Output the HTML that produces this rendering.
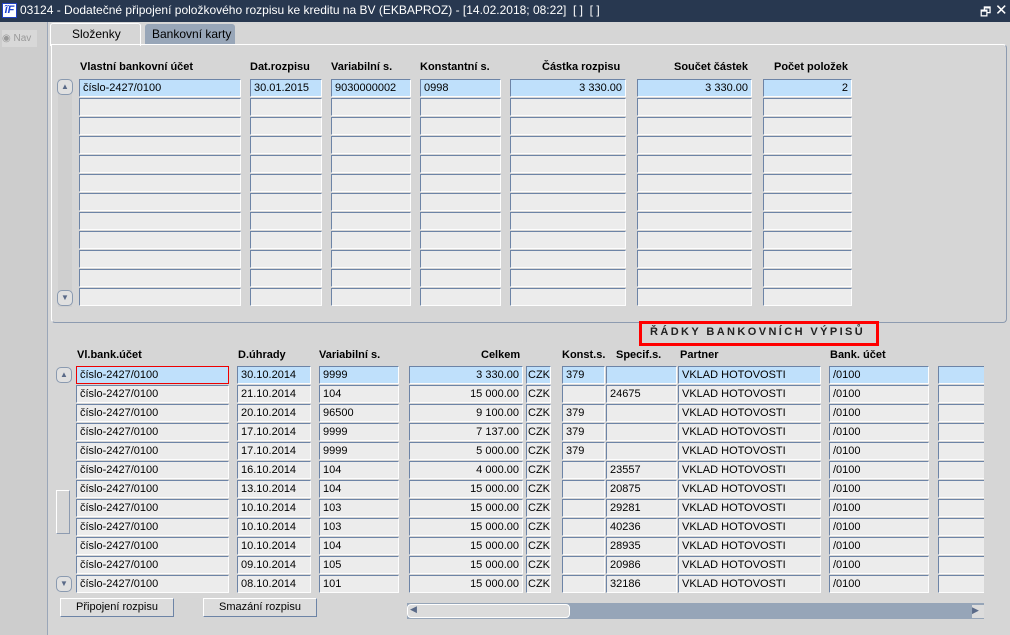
<!DOCTYPE html>
<html><head><meta charset="utf-8"><style>
*{margin:0;padding:0;box-sizing:border-box}
body{width:1010px;height:635px;overflow:hidden;background:#d6d6d6;font-family:"Liberation Sans",sans-serif;font-size:11px;color:#000;position:relative}
.a{position:absolute}
.f{position:absolute;height:18px;background:#ececec;border:1px solid;border-color:#6d84a6 #fdfdfd #fdfdfd #6d84a6;line-height:16px;padding:0 3px;white-space:nowrap;overflow:hidden;font-size:11px}
.s{background:#bfe0fb}
.r{text-align:right}
.h{position:absolute;font-weight:bold;font-size:11px;white-space:nowrap}
.btn{position:absolute;height:19px;border:1px solid;border-color:#fff #6d84a6 #6d84a6 #fff;background:#dcdcdc;text-align:center;line-height:17px;font-size:11px}
.sb{position:absolute;width:16px;height:16px;border:1px solid #8a9ab0;border-radius:5px;background:#e0e0e0;font-size:8px;color:#5a6a88;text-align:center;line-height:13px}
.row{position:absolute;left:0;height:19px;width:1010px}
.row .f{top:0}
.c1{left:79px;width:162px}.c2{left:250px;width:72px}.c3{left:331px;width:80px}.c4{left:420px;width:81px}.c5{left:510px;width:116px}.c6{left:637px;width:115px}.c7{left:763px;width:89px}
.b1{left:76px;width:153px}.b2{left:237px;width:74px}.b3{left:319px;width:80px}.b4{left:409px;width:114px;text-align:right}.b5{left:526px;width:25px;padding:0 1px}.b6{left:562px;width:43px}.b7{left:606px;width:71px}.b8{left:678px;width:143px}.b9{left:829px;width:100px}.b10{left:938px;width:46px;border-right:none}
</style></head><body>
<div class="a" style="left:0;top:0;width:1010px;height:22px;background:#283850"></div>
<div class="a" style="left:2px;top:3px;width:15px;height:15px;background:#fff;border:1px solid #2040c0;color:#1a3fd0;font-weight:bold;font-style:italic;font-size:11px;line-height:13px;text-align:center">ĩF</div>
<div class="a" style="left:20px;top:3px;color:#fff;font-size:12px;white-space:nowrap">03124 - Dodatečné připojení položkového rozpisu ke kreditu na BV (EKBAPROZ) - [14.02.2018; 08:22]&nbsp; [ ]&nbsp; [ ]</div>
<div class="a" style="left:980px;top:3px;color:#fff;font-size:12px">🗗</div>
<div class="a" style="left:995px;top:1px;color:#fff;font-size:15px">✕</div>
<div class="a" style="left:0;top:22px;width:48px;height:613px;background:#cdcdcd;border-right:1px solid #9aa6b8"></div>
<div class="a" style="left:2px;top:30px;width:35px;height:17px;background:#d8d8d8;color:#999;font-size:10px;line-height:17px;white-space:nowrap">◉ Nav</div>
<div class="a" style="left:50px;top:23px;width:91px;height:23px;background:#d6d6d6;border:1px solid #fff;border-bottom:none;border-radius:3px 3px 0 0"></div>
<div class="a" style="left:72px;top:27px;font-size:12px">Složenky</div>
<div class="a" style="left:145px;top:24px;width:90px;height:20px;background:#98a6b8;border-radius:3px 3px 0 0"></div>
<div class="a" style="left:152px;top:27px;font-size:12px">Bankovní karty</div>
<div class="a" style="left:51px;top:44px;width:956px;height:279px;border:1px solid #fff;border-right-color:#8d9bb0;border-bottom-color:#8d9bb0;border-radius:0 4px 4px 4px"></div>

<div class="h" style="left:80px;top:61px">Vlastní bankovní účet</div>
<div class="h" style="left:250px;top:61px">Dat.rozpisu</div>
<div class="h" style="left:331px;top:61px">Variabilní s.</div>
<div class="h" style="left:420px;top:61px">Konstantní s.</div>
<div class="h" style="left:542px;top:61px">Částka rozpisu</div>
<div class="h" style="left:674px;top:61px">Součet částek</div>
<div class="h" style="left:774px;top:61px">Počet položek</div>

<div class="a" style="left:58px;top:79px;width:14px;height:228px;background:#cfcfcf"></div>
<div class="sb" style="left:57px;top:79px">▲</div>
<div class="sb" style="left:57px;top:290px">▼</div>

<div class="row" style="top:79px"><div class="f s c1">číslo-2427/0100</div><div class="f s c2">30.01.2015</div><div class="f s c3">9030000002</div><div class="f s c4">0998</div><div class="f s r c5">3 330.00</div><div class="f s r c6">3 330.00</div><div class="f s r c7">2</div></div>
<div class="row" style="top:98px"><div class="f c1"></div><div class="f c2"></div><div class="f c3"></div><div class="f c4"></div><div class="f c5"></div><div class="f c6"></div><div class="f c7"></div></div>
<div class="row" style="top:117px"><div class="f c1"></div><div class="f c2"></div><div class="f c3"></div><div class="f c4"></div><div class="f c5"></div><div class="f c6"></div><div class="f c7"></div></div>
<div class="row" style="top:136px"><div class="f c1"></div><div class="f c2"></div><div class="f c3"></div><div class="f c4"></div><div class="f c5"></div><div class="f c6"></div><div class="f c7"></div></div>
<div class="row" style="top:155px"><div class="f c1"></div><div class="f c2"></div><div class="f c3"></div><div class="f c4"></div><div class="f c5"></div><div class="f c6"></div><div class="f c7"></div></div>
<div class="row" style="top:174px"><div class="f c1"></div><div class="f c2"></div><div class="f c3"></div><div class="f c4"></div><div class="f c5"></div><div class="f c6"></div><div class="f c7"></div></div>
<div class="row" style="top:193px"><div class="f c1"></div><div class="f c2"></div><div class="f c3"></div><div class="f c4"></div><div class="f c5"></div><div class="f c6"></div><div class="f c7"></div></div>
<div class="row" style="top:212px"><div class="f c1"></div><div class="f c2"></div><div class="f c3"></div><div class="f c4"></div><div class="f c5"></div><div class="f c6"></div><div class="f c7"></div></div>
<div class="row" style="top:231px"><div class="f c1"></div><div class="f c2"></div><div class="f c3"></div><div class="f c4"></div><div class="f c5"></div><div class="f c6"></div><div class="f c7"></div></div>
<div class="row" style="top:250px"><div class="f c1"></div><div class="f c2"></div><div class="f c3"></div><div class="f c4"></div><div class="f c5"></div><div class="f c6"></div><div class="f c7"></div></div>
<div class="row" style="top:269px"><div class="f c1"></div><div class="f c2"></div><div class="f c3"></div><div class="f c4"></div><div class="f c5"></div><div class="f c6"></div><div class="f c7"></div></div>
<div class="row" style="top:288px"><div class="f c1"></div><div class="f c2"></div><div class="f c3"></div><div class="f c4"></div><div class="f c5"></div><div class="f c6"></div><div class="f c7"></div></div>

<div class="a" style="left:639px;top:321px;width:240px;height:25px;border:3px solid #f00"></div>
<div class="a" style="left:650px;top:326px;font-weight:bold;font-size:11px;letter-spacing:2.4px;color:#222;white-space:nowrap">ŘÁDKY BANKOVNÍCH VÝPISŮ</div>

<div class="h" style="left:77px;top:349px">Vl.bank.účet</div>
<div class="h" style="left:238px;top:349px">D.úhrady</div>
<div class="h" style="left:319px;top:349px">Variabilní s.</div>
<div class="h" style="left:481px;top:349px">Celkem</div>
<div class="h" style="left:562px;top:349px">Konst.s.</div>
<div class="h" style="left:616px;top:349px">Specif.s.</div>
<div class="h" style="left:680px;top:349px">Partner</div>
<div class="h" style="left:830px;top:349px">Bank. účet</div>

<div class="sb" style="left:56px;top:367px">▲</div>
<div class="a" style="left:56px;top:490px;width:14px;height:44px;border:1px solid #fff;border-right-color:#8d9bb0;border-bottom-color:#8d9bb0"></div>
<div class="sb" style="left:56px;top:576px">▼</div>

<div class="row" style="top:366px"><div class="f s b1" style="border:1px solid #e00">číslo-2427/0100</div><div class="f s b2">30.10.2014</div><div class="f s b3">9999</div><div class="f s b4">3 330.00</div><div class="f s b5">CZK</div><div class="f s b6">379</div><div class="f s b7"></div><div class="f s b8">VKLAD HOTOVOSTI</div><div class="f s b9">/0100</div><div class="f s b10"></div></div>
<div class="row" style="top:385px"><div class="f b1">číslo-2427/0100</div><div class="f b2">21.10.2014</div><div class="f b3">104</div><div class="f b4">15 000.00</div><div class="f b5">CZK</div><div class="f b6"></div><div class="f b7">24675</div><div class="f b8">VKLAD HOTOVOSTI</div><div class="f b9">/0100</div><div class="f b10"></div></div>
<div class="row" style="top:404px"><div class="f b1">číslo-2427/0100</div><div class="f b2">20.10.2014</div><div class="f b3">96500</div><div class="f b4">9 100.00</div><div class="f b5">CZK</div><div class="f b6">379</div><div class="f b7"></div><div class="f b8">VKLAD HOTOVOSTI</div><div class="f b9">/0100</div><div class="f b10"></div></div>
<div class="row" style="top:423px"><div class="f b1">číslo-2427/0100</div><div class="f b2">17.10.2014</div><div class="f b3">9999</div><div class="f b4">7 137.00</div><div class="f b5">CZK</div><div class="f b6">379</div><div class="f b7"></div><div class="f b8">VKLAD HOTOVOSTI</div><div class="f b9">/0100</div><div class="f b10"></div></div>
<div class="row" style="top:442px"><div class="f b1">číslo-2427/0100</div><div class="f b2">17.10.2014</div><div class="f b3">9999</div><div class="f b4">5 000.00</div><div class="f b5">CZK</div><div class="f b6">379</div><div class="f b7"></div><div class="f b8">VKLAD HOTOVOSTI</div><div class="f b9">/0100</div><div class="f b10"></div></div>
<div class="row" style="top:461px"><div class="f b1">číslo-2427/0100</div><div class="f b2">16.10.2014</div><div class="f b3">104</div><div class="f b4">4 000.00</div><div class="f b5">CZK</div><div class="f b6"></div><div class="f b7">23557</div><div class="f b8">VKLAD HOTOVOSTI</div><div class="f b9">/0100</div><div class="f b10"></div></div>
<div class="row" style="top:480px"><div class="f b1">číslo-2427/0100</div><div class="f b2">13.10.2014</div><div class="f b3">104</div><div class="f b4">15 000.00</div><div class="f b5">CZK</div><div class="f b6"></div><div class="f b7">20875</div><div class="f b8">VKLAD HOTOVOSTI</div><div class="f b9">/0100</div><div class="f b10"></div></div>
<div class="row" style="top:499px"><div class="f b1">číslo-2427/0100</div><div class="f b2">10.10.2014</div><div class="f b3">103</div><div class="f b4">15 000.00</div><div class="f b5">CZK</div><div class="f b6"></div><div class="f b7">29281</div><div class="f b8">VKLAD HOTOVOSTI</div><div class="f b9">/0100</div><div class="f b10"></div></div>
<div class="row" style="top:518px"><div class="f b1">číslo-2427/0100</div><div class="f b2">10.10.2014</div><div class="f b3">103</div><div class="f b4">15 000.00</div><div class="f b5">CZK</div><div class="f b6"></div><div class="f b7">40236</div><div class="f b8">VKLAD HOTOVOSTI</div><div class="f b9">/0100</div><div class="f b10"></div></div>
<div class="row" style="top:537px"><div class="f b1">číslo-2427/0100</div><div class="f b2">10.10.2014</div><div class="f b3">104</div><div class="f b4">15 000.00</div><div class="f b5">CZK</div><div class="f b6"></div><div class="f b7">28935</div><div class="f b8">VKLAD HOTOVOSTI</div><div class="f b9">/0100</div><div class="f b10"></div></div>
<div class="row" style="top:556px"><div class="f b1">číslo-2427/0100</div><div class="f b2">09.10.2014</div><div class="f b3">105</div><div class="f b4">15 000.00</div><div class="f b5">CZK</div><div class="f b6"></div><div class="f b7">20986</div><div class="f b8">VKLAD HOTOVOSTI</div><div class="f b9">/0100</div><div class="f b10"></div></div>
<div class="row" style="top:575px"><div class="f b1">číslo-2427/0100</div><div class="f b2">08.10.2014</div><div class="f b3">101</div><div class="f b4">15 000.00</div><div class="f b5">CZK</div><div class="f b6"></div><div class="f b7">32186</div><div class="f b8">VKLAD HOTOVOSTI</div><div class="f b9">/0100</div><div class="f b10"></div></div>

<div class="btn" style="left:60px;top:598px;width:114px">Připojení rozpisu</div>
<div class="btn" style="left:203px;top:598px;width:114px">Smazání rozpisu</div>
<div class="a" style="left:407px;top:603px;width:577px;height:16px;background:#96a5b8"></div>
<div class="a" style="left:407px;top:604px;width:163px;height:14px;background:#dcdcdc;border:1px solid #fff;border-radius:4px"></div>
<div class="a" style="left:410px;top:604px;font-size:9px;color:#5a6a88">◀</div>
<div class="a" style="left:972px;top:605px;width:12px;height:13px;background:#dcdcdc;font-size:9px;color:#5a6a88">▶</div>
</body></html>
